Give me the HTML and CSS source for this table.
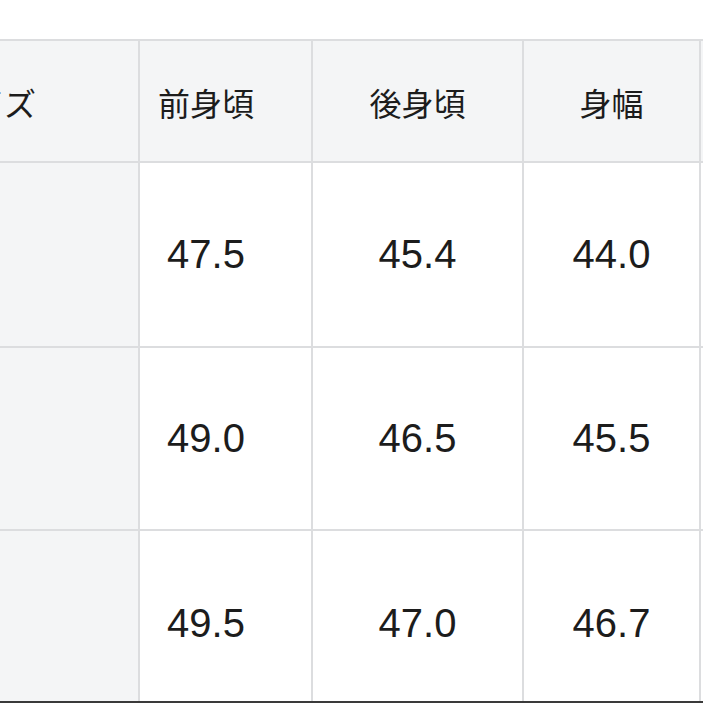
FILE: index.html
```html
<!DOCTYPE html>
<html lang="ja">
<head>
<meta charset="utf-8">
<link rel="stylesheet" href="styles.css">
</head>
<body>
<div class="page">
  <div class="grid">
    <div class="cell head first">サイズ</div>
    <div class="cell head c2">前身頃</div>
    <div class="cell head">後身頃</div>
    <div class="cell head">身幅</div>
    <div class="cell head"></div>

    <div class="cell side"></div>
    <div class="cell num c2">47.5</div>
    <div class="cell num">45.4</div>
    <div class="cell num">44.0</div>
    <div class="cell num"></div>

    <div class="cell side"></div>
    <div class="cell num c2">49.0</div>
    <div class="cell num">46.5</div>
    <div class="cell num">45.5</div>
    <div class="cell num"></div>

    <div class="cell side"></div>
    <div class="cell num c2">49.5</div>
    <div class="cell num">47.0</div>
    <div class="cell num">46.7</div>
    <div class="cell num"></div>
  </div>
</div>
<div class="edge"></div>
</body>
</html>
```
FILE: styles.css
```css
html, body {
  margin: 0;
  padding: 0;
  width: 703px;
  height: 703px;
  overflow: hidden;
  background: #ffffff;
}
.page {
  padding-top: 39px;
  width: 703px;
  height: 703px;
  overflow: hidden;
}
.grid {
  margin-left: -163px;
  display: grid;
  grid-template-columns: 299px 171px 209px 175px 200px;
  grid-template-rows: 120px 183px 181px 184px;
  gap: 2px;
  padding: 2px;
  background: #dcdddf;
  width: max-content;
}
.cell {
  display: flex;
  align-items: center;
  justify-content: center;
  background: #ffffff;
  color: #1c1c1c;
}
.head {
  background: #f4f5f6;
  font-family: "Noto Sans CJK JP", "Noto Sans", sans-serif;
  font-size: 32px;
  padding-top: 2px;
}
.side {
  background: #f4f5f6;
}
.num {
  font-family: "Liberation Sans", Arial, sans-serif;
  font-size: 40px;
}
.c2 {
  padding-right: 39px;
}
.edge {
  position: fixed;
  left: 0;
  bottom: 0;
  width: 703px;
  height: 2px;
  background: #3a3a3a;
}
```
